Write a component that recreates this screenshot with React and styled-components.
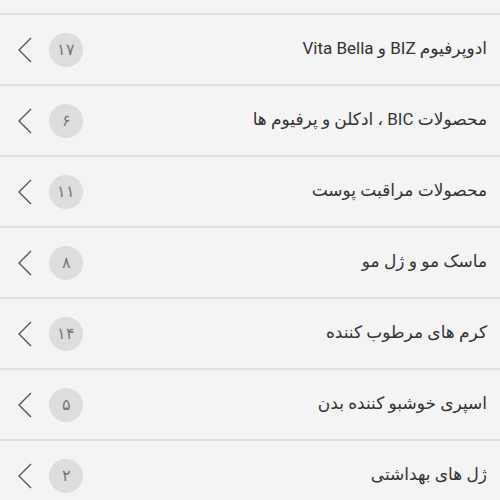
import styled, { createGlobalStyle } from 'styled-components';

const GlobalStyle = createGlobalStyle`
  html, body {
    margin: 0;
    padding: 0;
    background: #f4f4f4;
  }
  body {
    font-family: 'Roboto', 'DejaVu Sans', sans-serif;
  }
`;

const List = styled.div`
  padding-top: 13px;
  background: #f4f4f4;
`;

const Row = styled.div`
  display: flex;
  align-items: center;
  height: 69px;
  border-top: 2px solid #e0e0e0;
  padding: 0 13px 0 18px;
`;

const Chevron = styled.svg`
  width: 14px;
  height: 26px;
  flex: none;
`;

const Badge = styled.span`
  width: 34px;
  height: 34px;
  border-radius: 50%;
  background: #dddddd;
  color: #777;
  font-size: 16px;
  font-weight: 300;
  display: flex;
  align-items: center;
  justify-content: center;
  margin-left: 17px;
  flex: none;
  font-family: 'DejaVu Sans', sans-serif;
`;

const Title = styled.span`
  flex: 1;
  text-align: right;
  direction: rtl;
  font-size: 17px;
  color: #333;
  padding-bottom: 3px;
`;

const items = [
  { title: 'ادوپرفیوم BIZ و Vita Bella', count: '۱۷' },
  { title: 'محصولات BIC ، ادکلن و پرفیوم ها', count: '۶' },
  { title: 'محصولات مراقبت پوست', count: '۱۱' },
  { title: 'ماسک مو و ژل مو', count: '۸' },
  { title: 'کرم های مرطوب کننده', count: '۱۴' },
  { title: 'اسپری خوشبو کننده بدن', count: '۵' },
  { title: 'ژل های بهداشتی', count: '۲' },
];

export default function App() {
  return (
    <>
      <GlobalStyle />
      <List>
        {items.map((item) => (
          <Row key={item.title}>
            <Chevron viewBox="0 0 14 26">
              <path d="M13 1 L1 13 L13 25" fill="none" stroke="#555" strokeWidth="1.4" />
            </Chevron>
            <Badge>{item.count}</Badge>
            <Title>{item.title}</Title>
          </Row>
        ))}
      </List>
    </>
  );
}
